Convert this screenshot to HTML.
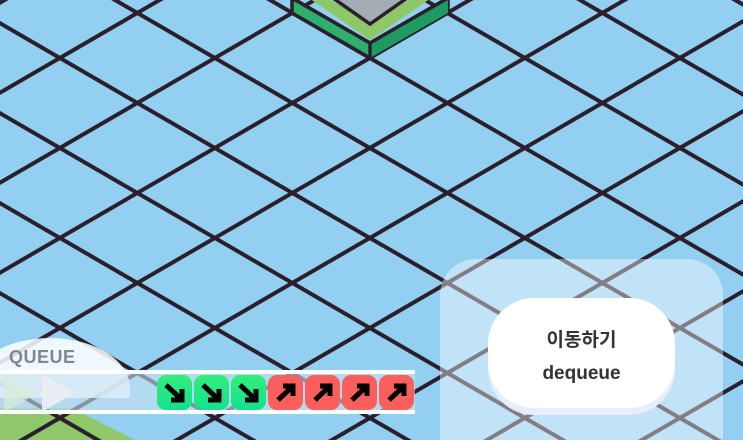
<!DOCTYPE html>
<html style="overflow:hidden;width:743px;height:440px"><head><meta charset="utf-8"><style>
body{margin:0;width:743px;height:440px;overflow:hidden;background:#93cff1;position:relative;font-family:"Liberation Sans","Noto Sans CJK KR",sans-serif}
svg{position:absolute;left:0;top:0}
.t{position:absolute;top:375px;width:35px;height:35px;border-radius:9px;}
.g{background:linear-gradient(#33ef7a,#14e08f)}
.r{background:#fa5f5c}
.t svg{position:static}
</style></head><body>
<svg width="743" height="440" viewBox="0 0 743 440">
<polygon points="0,408 72,408 135,440 0,440" fill="#8fc76a"/>
<g stroke="#2b1f2b" stroke-width="4" id="grid"></g>
<polygon points="292,-2 370,43 448,-2 448,13 370,58 292,13" fill="#2eaf6c" stroke="#2b1f2b" stroke-width="3.5"/>
<polygon points="370,43 448,-2 448,13 370,58" fill="#1f9a62"/>
<line x1="370" y1="43" x2="370" y2="58" stroke="#2b1f2b" stroke-width="3.5"/>
<polygon points="300,-18 370,23 440,-18 440,-8 370,40 300,-8" fill="#8ec765"/>
<polygon points="310,-18 370,24 430,-18" fill="#a2adb4" stroke="#2b1f2b" stroke-width="3.5"/>
<polyline points="292,-2 370,43 448,-2" fill="none" stroke="#2b1f2b" stroke-width="3.5"/>
</svg>
<script>
(function(){var g=document.getElementById('grid'),s=45/77.5,h='';
for(var k=-6;k<12;k++){var c=23.2+90*k;h+='<line x1="-10" y1="'+(c-10*s)+'" x2="760" y2="'+(c+760*s)+'"/>';
var u=92.7+90*k;h+='<line x1="-10" y1="'+(u+10*s)+'" x2="760" y2="'+(u-760*s)+'"/>';}
g.innerHTML=h;})();
</script>
<div style="position:absolute;left:-30px;top:338px;width:160px;height:60px;border-radius:80px 80px 0 0/50px 50px 0 0;background:rgba(255,255,255,0.85)"></div>
<div style="position:absolute;left:9px;top:347px;font-size:18px;font-weight:bold;color:#7f8790;letter-spacing:0.5px">QUEUE</div>
<div style="position:absolute;left:0;top:370px;width:415px;height:44px;background:rgba(200,225,240,0.6);border-top:4px solid #fff;border-bottom:4px solid #fff;box-sizing:border-box"></div>
<svg width="90" height="440" style="left:0;top:0"><polygon points="4,374 38,393 4,412" fill="rgba(220,235,215,0.7)"/><polygon points="42,374 74,393 42,412" fill="rgba(235,238,242,0.95)"/></svg>
<div class="t g" style="left:157px"><svg width="35" height="35"><path d="M9,10 L24,24 M14,25 L25,25 L25,14" stroke="#000" stroke-width="5" fill="none"/></svg></div>
<div class="t g" style="left:194px"><svg width="35" height="35"><path d="M9,10 L24,24 M14,25 L25,25 L25,14" stroke="#000" stroke-width="5" fill="none"/></svg></div>
<div class="t g" style="left:231px"><svg width="35" height="35"><path d="M9,10 L24,24 M14,25 L25,25 L25,14" stroke="#000" stroke-width="5" fill="none"/></svg></div>
<div class="t r" style="left:268px"><svg width="35" height="35"><path d="M10,25 L24,12 M15,11 L25,11 L25,21" stroke="#000" stroke-width="5" fill="none"/></svg></div>
<div class="t r" style="left:305px"><svg width="35" height="35"><path d="M10,25 L24,12 M15,11 L25,11 L25,21" stroke="#000" stroke-width="5" fill="none"/></svg></div>
<div class="t r" style="left:342px"><svg width="35" height="35"><path d="M10,25 L24,12 M15,11 L25,11 L25,21" stroke="#000" stroke-width="5" fill="none"/></svg></div>
<div class="t r" style="left:379px"><svg width="35" height="35"><path d="M10,25 L24,12 M15,11 L25,11 L25,21" stroke="#000" stroke-width="5" fill="none"/></svg></div>
<div style="position:absolute;left:440px;top:259px;width:283px;height:181px;border-radius:36px 36px 0 0;background:rgba(255,255,255,0.42)"></div>
<div style="position:absolute;left:488px;top:298px;width:187px;height:117px;border-radius:46px;background:#e6eef9"></div>
<div style="position:absolute;left:488px;top:298px;width:187px;height:110px;border-radius:46px;background:#fff;text-align:center;color:#333;font-size:19px;font-weight:bold;line-height:33px;padding-top:26px;box-sizing:border-box">이동하기<br>dequeue</div>
</body></html>
